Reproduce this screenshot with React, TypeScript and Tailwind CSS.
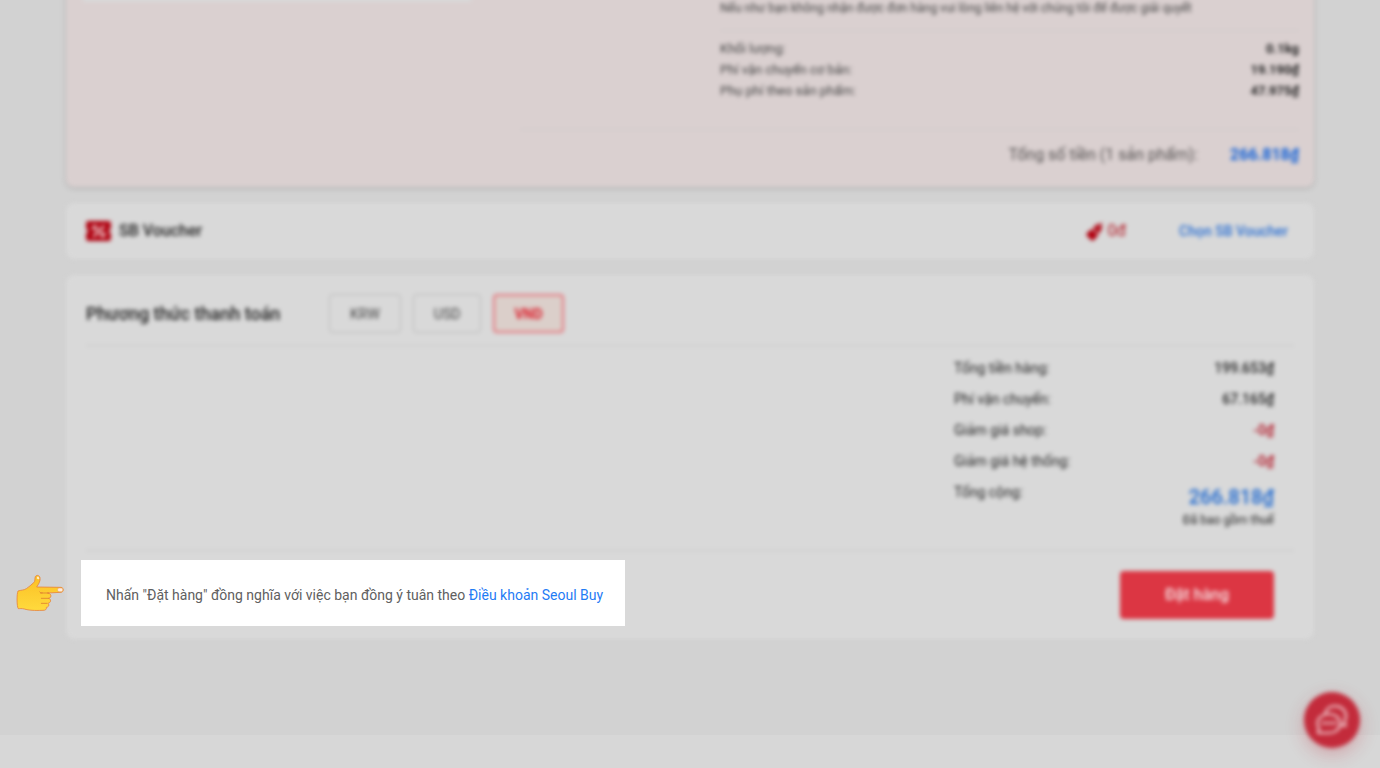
import React, { useState } from 'react';

const currencies = ['KRW', 'USD', 'VND'];

const shippingFees = [
  { label: 'Khối lượng:', value: '0.1kg' },
  { label: 'Phí vận chuyển cơ bản:', value: '19.190₫' },
  { label: 'Phụ phí theo sản phẩm:', value: '47.975₫' },
];

const summary = [
  { label: 'Tổng tiền hàng:', value: '199.653₫', discount: false },
  { label: 'Phí vận chuyển:', value: '67.165₫', discount: false },
  { label: 'Giảm giá shop:', value: '-0₫', discount: true },
  { label: 'Giảm giá hệ thống:', value: '-0₫', discount: true },
];

function VoucherIcon() {
  return (
    <svg width="25" height="20" viewBox="0 0 26 21" aria-hidden="true">
      <path
        d="M2 0h22a2 2 0 0 1 2 2v6.500a2 2 0 0 0 0 4V19a2 2 0 0 1-2 2H2a2 2 0 0 1-2-2v-6.500a2 2 0 0 0 0-4V2a2 2 0 0 1 2-2z"
        fill="#b0000f"
      />
      <path d="M8 16 18.500 5.500" stroke="#f3dcde" strokeWidth="2.200" strokeLinecap="round" />
      <circle cx="9" cy="7" r="2" fill="none" stroke="#f3dcde" strokeWidth="1.800" />
      <circle cx="17.500" cy="14.500" r="2" fill="none" stroke="#f3dcde" strokeWidth="1.800" />
    </svg>
  );
}

function TagIcon() {
  return (
    <svg width="18" height="20" viewBox="0 0 18 20" aria-hidden="true">
      <path
        d="M9.500 4 14 2.500q2-.3 2 1.500l-.5 4.500q-.2 1-1 1.800l-2 1.700q.3 1.500-.8 2.700L8 19q-1.500 1.500-3 0l-4-4q-1.200-1.500 0-3L5 8.500q1-1 2-.8z"
        fill="#b0000f"
      />
      <path d="m6 7.500 6 5.500" stroke="#d9b5b8" strokeWidth="1.400" />
      <circle cx="12.500" cy="6" r="1" fill="#d9b5b8" />
      <path d="M15 3.500 17 .5" stroke="#c98a8f" strokeWidth="1" />
    </svg>
  );
}

function PointingHand() {
  return (
    <svg width="48" height="38" viewBox="48 42 144 114" aria-hidden="true">
      <defs>
        <linearGradient id="skin" x1="0" y1="0" x2="0" y2="1">
          <stop offset="0" stopColor="#fbbf24" />
          <stop offset="1" stopColor="#ffda3d" />
        </linearGradient>
      </defs>
      <path
        d="M54 93c9-3 17-2 25-7 8-5 15-12 22-18 6-5 2-11 5-18 3-6 12-5 14 3 2 10-4 19-10 28l73 1c9 1 9 14 0 15l-41 2c13 0 14 15 4 16 8 2 8 14-3 15 6 2 4 12-4 12 1 7-3 9-10 9-27 1-42 0-56-4-8-2-14-1-18-1-5-6-5-45-1-53z"
        fill="url(#skin)"
        stroke="#e8843a"
        strokeWidth="2.500"
        strokeLinejoin="round"
      />
      <path
        d="M122 99h24M124 115h22M124 130h16M127 99q-5 2-8-3"
        fill="none"
        stroke="#df7f30"
        strokeWidth="2.500"
        strokeLinecap="round"
      />
      <rect x="173" y="84" width="15" height="11" rx="4" fill="#fdece0" stroke="#e39a5c" strokeWidth="1.500" />
      <path d="M110 55q1-8 6-5l2 6q-3 4-8-1z" fill="#ffeccb" />
    </svg>
  );
}

function ChatIcon() {
  return (
    <svg width="36" height="36" viewBox="0 0 36 36" fill="none" stroke="#f0ccd0" strokeWidth="2.200" strokeLinejoin="round" strokeLinecap="round" aria-hidden="true">
      <path d="M11 12c1-5 5-8 10-8 6.500 0 11 4.500 11 10 0 2-.6 4-1.500 5.500l1 4.500-5-1" />
      <path d="M15 12c6 0 11 3.500 11 9.500S21 31 15 31H4l1-5C4 24.500 3.500 23 3.500 21.500 3.500 15.500 9 12 15 12z" />
      <path d="M9.500 21h11" strokeWidth="3" strokeDasharray="1 4" />
    </svg>
  );
}

function OrderCard() {
  return (
    <section className="-mt-4 rounded-b-lg bg-[#dad0d0] pr-[15px] pb-[7px] pl-4 shadow-[0_1px_4px_rgba(0,0,0,0.2)]">
      <div className="flex items-start justify-between">
        <div className="h-[18px] w-[390px] rounded-b bg-[#d9d9d9]" />
        <div className="w-[579px] pt-4 text-[13px] text-[#444444]">
          <p className="text-xs leading-4">
            Nếu như bạn không nhận được đơn hàng vui lòng liên hệ với chúng tôi để được giải quyết
          </p>
          <dl className="mt-[14px] border-t border-[#cdc9c9] pt-[7px]">
            {shippingFees.map((fee) => (
              <div key={fee.label} className="flex justify-between leading-[21px]">
                <dt>{fee.label}</dt>
                <dd className="font-bold text-[#222222]">{fee.value}</dd>
              </div>
            ))}
          </dl>
        </div>
      </div>
      <div className="mt-7 ml-auto flex h-[51px] max-w-[779px] items-center justify-end gap-8 border-t border-[#cdc9c9] text-base">
        <span className="text-[#555252]">Tổng số tiền (1 sản phẩm):</span>
        <strong className="font-bold text-[#1060d8]">266.818₫</strong>
      </div>
    </section>
  );
}

function VoucherCard() {
  return (
    <section className="flex h-14 items-center rounded-lg bg-[#d9d9d9] pr-[26px] pl-5">
      <VoucherIcon />
      <h2 className="ml-2 text-base font-medium text-[#1d1d1d]">SB Voucher</h2>
      <div className="ml-auto flex items-center gap-1 text-base text-[#b0101c]">
        <TagIcon />
        <span>0đ</span>
      </div>
      <button type="button" className="ml-[53px] text-sm font-medium text-[#2a6fd3]">
        Chọn SB Voucher
      </button>
    </section>
  );
}

function PaymentCard() {
  const [currency, setCurrency] = useState('VND');

  return (
    <section className="rounded-lg bg-[#d9d9d9] px-5 pt-[19px] pb-5">
      <div className="flex items-center border-b border-[#c6c6c6] pb-3">
        <h2 className="w-[243px] text-lg font-medium text-[#1d1d1d]">Phương thức thanh toán</h2>
        <div className="flex gap-3">
          {currencies.map((item) => (
            <button
              key={item}
              type="button"
              aria-pressed={item === currency}
              onClick={() => setCurrency(item)}
              className={
                item === currency
                  ? 'h-[39px] rounded border-2 border-[#e5767d] bg-[#dbcfca] px-[19px] text-sm font-bold text-[#dc1f2c]'
                  : 'h-[39px] rounded border border-[#b8b8b8] px-5 text-sm text-[#444444]'
              }
            >
              {item}
            </button>
          ))}
        </div>
      </div>

      <dl className="mr-5 ml-auto w-80 pt-[7px] text-sm text-[#222222]">
        {summary.map((row) => (
          <div key={row.label} className="flex justify-between leading-[31px]">
            <dt>{row.label}</dt>
            <dd className={row.discount ? 'font-medium text-[#b01020]' : 'font-medium'}>{row.value}</dd>
          </div>
        ))}
        <div className="flex justify-between">
          <dt className="leading-[31px]">Tổng cộng:</dt>
          <dd className="pt-[5px] pb-[22px] text-right">
            <p className="text-xl leading-[30px] font-medium text-[#1a66cf]">266.818₫</p>
            <p className="text-xs leading-4">Đã bao gồm thuế</p>
          </dd>
        </div>
      </dl>

      <div className="flex justify-end border-t border-[#c6c6c6] pt-5 pr-5">
        <button type="button" className="h-12 w-[154px] rounded bg-[#dc3643] text-base font-medium text-[#f5e4e6]">
          Đặt hàng
        </button>
      </div>
    </section>
  );
}

export default function App() {
  return (
    <div className="flex min-h-screen flex-col overflow-hidden bg-[#d2d2d2] font-['Roboto','Noto_Sans',sans-serif]">
      <main className="mx-auto w-full max-w-[1248px]">
        <div className="blur-[2px]">
          <OrderCard />
        </div>
        <div className="mt-4 blur-[2px]">
          <VoucherCard />
        </div>
        <div className="relative mt-4">
          <div className="blur-[2px]">
            <PaymentCard />
          </div>
          {/* highlighted terms note */}
          <div className="absolute bottom-[13px] left-[15px] flex h-[66px] w-[544px] items-center bg-white pt-1 pl-[25px] text-sm text-[#606060]">
            <div className="absolute top-[14px] right-full mr-[17px]">
              <PointingHand />
            </div>
            <p>
              Nhấn "Đặt hàng" đồng nghĩa với việc bạn đồng ý tuân theo{' '}
              <a href="#terms" className="text-[#1f7cf5]">
                Điều khoản Seoul Buy
              </a>
            </p>
          </div>
        </div>
      </main>
      <footer className="mt-24 min-h-8 flex-1 bg-[#d7d7d7]" />
      <button
        type="button"
        aria-label="Chat"
        className="fixed right-5 bottom-5 flex size-14 items-center justify-center rounded-full bg-[#c32b3b] shadow-[0_6px_18px_rgba(195,43,59,0.3)] blur-[2px]"
      >
        <ChatIcon />
      </button>
    </div>
  );
}
